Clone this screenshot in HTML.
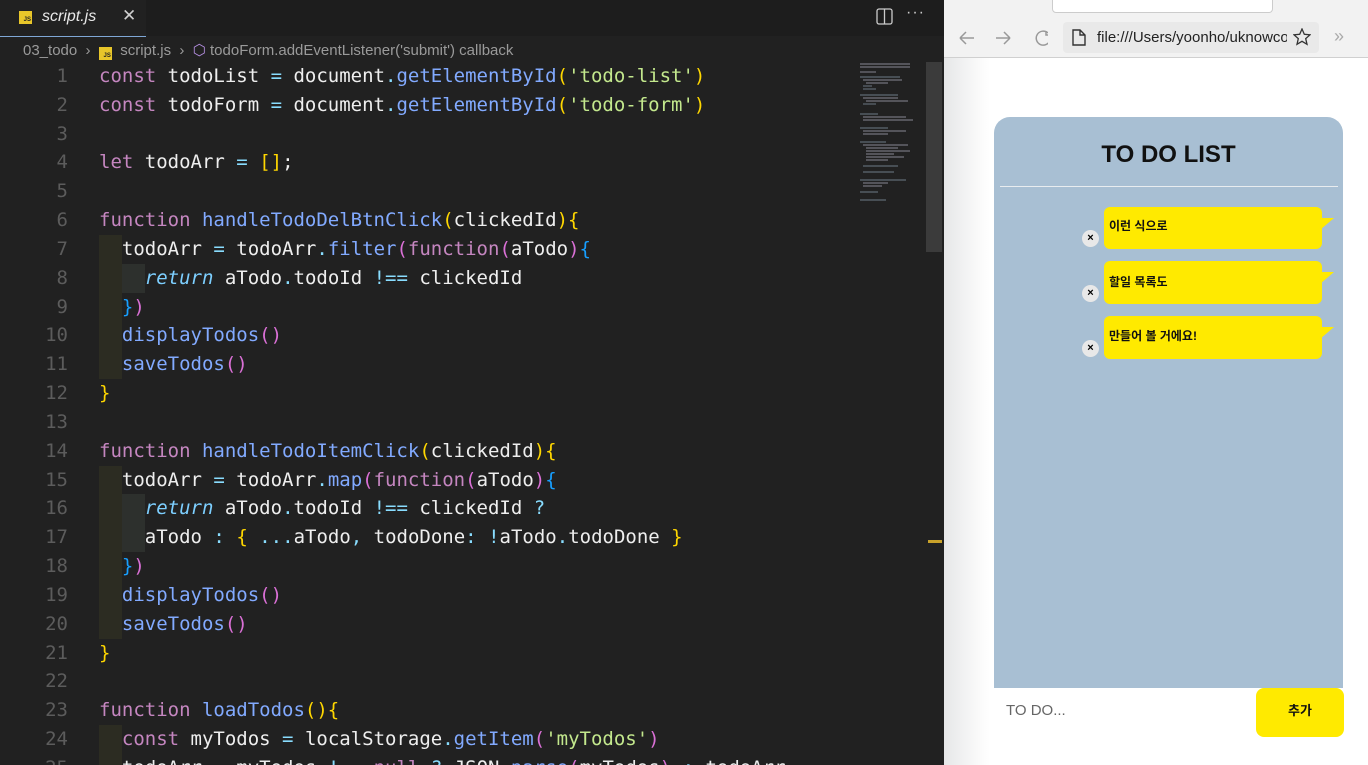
<!DOCTYPE html>
<html><head><meta charset="utf-8"><style>
*{margin:0;padding:0;box-sizing:border-box}
html,body{width:1368px;height:765px;overflow:hidden}
body{background:#212121;position:relative;font-family:"Liberation Sans",sans-serif}
#ed{position:absolute;left:0;top:0;width:944px;height:765px;background:#212121;overflow:hidden}
#tabs{position:absolute;left:0;top:0;width:944px;height:36px;background:#1d1d1d}
#tab{position:absolute;left:0;top:0;width:146px;height:37px;background:#212121;border-bottom:1px solid #7fa7d6}
.jsic{position:absolute;width:13px;height:13px;background:#e8c62a;color:#222;font:bold 6px "Liberation Sans",sans-serif;text-align:right;padding:6px 1px 0 0;line-height:6px}
#bc{position:absolute;left:23px;top:41px;font-size:15px;color:#9a9a9a;white-space:nowrap}
#code{position:absolute;left:0;top:62px;font-family:"DejaVu Sans Mono","Liberation Mono",monospace;font-size:19px;color:#eeeeee}
.l{height:28.83px;line-height:28.83px;white-space:pre;position:relative}
.n{display:inline-block;width:68px;text-align:right;color:#5c5c5c;margin-right:31px}
.i1{background:#2c2c22;display:inline-block;height:28.83px;vertical-align:top}.i2{background:#2d302d;display:inline-block;height:28.83px;vertical-align:top}
.k{color:#c586c0}.f{color:#82aaff}.s{color:#c3e88d}.y{color:#ffd700}.p{color:#da70d6}.b{color:#179fff}.r{color:#7dcfff;font-style:italic}.o{color:#89ddff}
#mini{position:absolute;left:858px;top:62px;width:58px;height:140px}
#sb{position:absolute;left:926px;top:62px;width:16px;height:190px;background:#3b3b3b}
#br{position:absolute;left:944px;top:0;width:424px;height:765px;background:#fff;overflow:hidden}
.t{position:absolute;white-space:nowrap}
</style></head><body>
<div id="ed">
<div id="tabs">
<div id="tab"><div class="jsic" style="left:19px;top:11px">JS</div>
<span style="position:absolute;left:42px;top:8px;font-style:italic;color:#e8e8e8;font-size:16px">script.js</span>
<span style="position:absolute;left:122px;top:6px;color:#cfcfcf;font-size:17px">✕</span></div>
<svg style="position:absolute;left:876px;top:8px" width="17" height="17"><rect x="1" y="1" width="15" height="15" rx="2" fill="none" stroke="#ccc" stroke-width="1.3"/><line x1="8.5" y1="1" x2="8.5" y2="16" stroke="#ccc" stroke-width="1.3"/></svg>
<span style="position:absolute;left:906px;top:4px;color:#ccc;font-size:16px;letter-spacing:1px">···</span>
</div>
<div id="bc">03_todo &nbsp;›&nbsp; <span class="jsic" style="position:relative;display:inline-block;top:2px">JS</span>&nbsp; script.js &nbsp;›&nbsp; <span style="color:#b48ee0">⬡</span> todoForm.addEventListener('submit') callback</div>
<div id="code">
<div class="l"><span class="n">1</span><span class="k">const</span> todoList <span class="o">=</span> document<span class="o">.</span><span class="f">getElementById</span><span class="y">(</span><span class="s">'todo-list'</span><span class="y">)</span></div>
<div class="l"><span class="n">2</span><span class="k">const</span> todoForm <span class="o">=</span> document<span class="o">.</span><span class="f">getElementById</span><span class="y">(</span><span class="s">'todo-form'</span><span class="y">)</span></div>
<div class="l"><span class="n">3</span></div>
<div class="l"><span class="n">4</span><span class="k">let</span> todoArr <span class="o">=</span> <span class="y">[]</span>;</div>
<div class="l"><span class="n">5</span></div>
<div class="l"><span class="n">6</span><span class="k">function</span> <span class="f">handleTodoDelBtnClick</span><span class="y">(</span>clickedId<span class="y">){</span></div>
<div class="l"><span class="n">7</span><span class="i1">  </span>todoArr <span class="o">=</span> todoArr<span class="o">.</span><span class="f">filter</span><span class="p">(</span><span class="k">function</span><span class="p">(</span>aTodo<span class="p">)</span><span class="b">{</span></div>
<div class="l"><span class="n">8</span><span class="i1">  </span><span class="i2">  </span><span class="r">return</span> aTodo<span class="o">.</span>todoId <span class="o">!==</span> clickedId</div>
<div class="l"><span class="n">9</span><span class="i1">  </span><span class="b">}</span><span class="p">)</span></div>
<div class="l"><span class="n">10</span><span class="i1">  </span><span class="f">displayTodos</span><span class="p">()</span></div>
<div class="l"><span class="n">11</span><span class="i1">  </span><span class="f">saveTodos</span><span class="p">()</span></div>
<div class="l"><span class="n">12</span><span class="y">}</span></div>
<div class="l"><span class="n">13</span></div>
<div class="l"><span class="n">14</span><span class="k">function</span> <span class="f">handleTodoItemClick</span><span class="y">(</span>clickedId<span class="y">){</span></div>
<div class="l"><span class="n">15</span><span class="i1">  </span>todoArr <span class="o">=</span> todoArr<span class="o">.</span><span class="f">map</span><span class="p">(</span><span class="k">function</span><span class="p">(</span>aTodo<span class="p">)</span><span class="b">{</span></div>
<div class="l"><span class="n">16</span><span class="i1">  </span><span class="i2">  </span><span class="r">return</span> aTodo<span class="o">.</span>todoId <span class="o">!==</span> clickedId <span class="o">?</span></div>
<div class="l"><span class="n">17</span><span class="i1">  </span><span class="i2">  </span>aTodo <span class="o">:</span> <span class="y">{</span> <span class="o">...</span>aTodo<span class="o">,</span> todoDone<span class="o">:</span> <span class="o">!</span>aTodo<span class="o">.</span>todoDone <span class="y">}</span></div>
<div class="l"><span class="n">18</span><span class="i1">  </span><span class="b">}</span><span class="p">)</span></div>
<div class="l"><span class="n">19</span><span class="i1">  </span><span class="f">displayTodos</span><span class="p">()</span></div>
<div class="l"><span class="n">20</span><span class="i1">  </span><span class="f">saveTodos</span><span class="p">()</span></div>
<div class="l"><span class="n">21</span><span class="y">}</span></div>
<div class="l"><span class="n">22</span></div>
<div class="l"><span class="n">23</span><span class="k">function</span> <span class="f">loadTodos</span><span class="y">(){</span></div>
<div class="l"><span class="n">24</span><span class="i1">  </span><span class="k">const</span> myTodos <span class="o">=</span> localStorage<span class="o">.</span><span class="f">getItem</span><span class="p">(</span><span class="s">'myTodos'</span><span class="p">)</span></div>
<div class="l"><span class="n">25</span><span class="i1">  </span>todoArr <span class="o">=</span> myTodos <span class="o">!==</span> <span class="k">null</span> <span class="o">?</span> JSON<span class="o">.</span><span class="f">parse</span><span class="p">(</span>myTodos<span class="p">)</span> <span class="o">:</span> todoArr</div>
</div>
<svg id="mini" viewBox="0 0 58 140">
<g stroke-width="1.2" opacity="0.6">
<line x1="2" y1="2" x2="52" y2="2" stroke="#aab"/><line x1="2" y1="5" x2="52" y2="5" stroke="#aab"/>
<line x1="2" y1="10" x2="18" y2="10" stroke="#aab"/>
<line x1="2" y1="15" x2="42" y2="15" stroke="#89a"/><line x1="5" y1="18" x2="44" y2="18" stroke="#aab"/><line x1="8" y1="21" x2="30" y2="21" stroke="#aab"/><line x1="5" y1="24" x2="14" y2="24" stroke="#89a"/><line x1="5" y1="27" x2="18" y2="27" stroke="#89a"/>
<line x1="2" y1="33" x2="40" y2="33" stroke="#89a"/><line x1="5" y1="36" x2="40" y2="36" stroke="#aab"/><line x1="8" y1="39" x2="50" y2="39" stroke="#aab"/><line x1="5" y1="42" x2="18" y2="42" stroke="#89a"/>
<line x1="2" y1="52" x2="20" y2="52" stroke="#89a"/><line x1="5" y1="55" x2="48" y2="55" stroke="#aab"/><line x1="5" y1="58" x2="55" y2="58" stroke="#aab"/>
<line x1="2" y1="66" x2="30" y2="66" stroke="#89a"/><line x1="5" y1="69" x2="48" y2="69" stroke="#aab"/><line x1="5" y1="72" x2="30" y2="72" stroke="#aab"/>
<line x1="2" y1="80" x2="28" y2="80" stroke="#89a"/><line x1="5" y1="83" x2="50" y2="83" stroke="#aab"/><line x1="8" y1="86" x2="40" y2="86" stroke="#aab"/><line x1="8" y1="89" x2="52" y2="89" stroke="#aab"/><line x1="8" y1="92" x2="36" y2="92" stroke="#aab"/><line x1="8" y1="95" x2="46" y2="95" stroke="#aab"/><line x1="8" y1="98" x2="30" y2="98" stroke="#aab"/><line x1="5" y1="104" x2="40" y2="104" stroke="#89a"/><line x1="5" y1="110" x2="36" y2="110" stroke="#89a"/>
<line x1="2" y1="118" x2="48" y2="118" stroke="#89a"/><line x1="5" y1="121" x2="30" y2="121" stroke="#aab"/><line x1="5" y1="124" x2="24" y2="124" stroke="#aab"/><line x1="2" y1="130" x2="20" y2="130" stroke="#89a"/><line x1="2" y1="138" x2="28" y2="138" stroke="#89a"/>
</g></svg>
<div id="sb"></div>
<div style="position:absolute;left:928px;top:540px;width:14px;height:3px;background:#c9a22a"></div>
</div>
<div id="br">
<div style="position:absolute;left:0;top:0;width:424px;height:58px;background:#f2f2f2;border-bottom:1px solid #d0d0d0"></div>
<div style="position:absolute;left:108px;top:-4px;width:221px;height:17px;background:#fff;border:1px solid #ccc;border-radius:4px"></div>
<svg style="position:absolute;left:14px;top:28px" width="90" height="20" fill="none" stroke="#999" stroke-width="1.5"><path d="M2 10H16M2 10L8 4M2 10L8 16"/><path d="M38 10H52M52 10L46 4M52 10L46 16"/><path d="M90 5A7 7 0 1 0 92 12"/><path d="M88 3V7H92"/></svg>
<div style="position:absolute;left:119px;top:22px;width:256px;height:31px;background:#e9e9e9;border-radius:4px"></div>
<svg style="position:absolute;left:128px;top:29px" width="14" height="17" fill="none" stroke="#333" stroke-width="1.4"><path d="M1 1H8L13 6V16H1Z M8 1V6H13"/></svg>
<div class="t" style="left:153px;top:29px;font-size:15px;color:#222;width:190px;overflow:hidden">file:///Users/yoonho/uknowcod</div>
<svg style="position:absolute;left:349px;top:28px" width="18" height="18" fill="none" stroke="#333" stroke-width="1.3"><path d="M9 1L11.3 6.3L17 6.8L12.7 10.6L14 16.3L9 13.3L4 16.3L5.3 10.6L1 6.8L6.7 6.3Z"/></svg>
<div class="t" style="left:390px;top:26px;color:#aaa;font-size:18px">»</div>
<div style="position:absolute;left:0;top:58px;width:46px;height:707px;background:linear-gradient(90deg,#e6e7e8,#fbfbfb 80%,#fff)"></div>
<div style="position:absolute;left:50px;top:117px;width:349px;height:571px;background:#a8bfd3;border-radius:16px 16px 0 0">
<div class="t" style="left:0;top:24px;width:349px;text-align:center;font-size:24px;font-weight:bold;color:#111">TO DO LIST</div>
<div style="position:absolute;left:6px;top:69px;width:338px;height:1px;background:#e8ecef"></div>
</div>
<div style="position:absolute;left:0;top:0;width:424px;height:765px;font-family:'Liberation Sans','Noto Sans CJK KR',sans-serif">
<div style="position:absolute;left:160px;top:207px;width:218px;height:42px;background:#ffea00;border-radius:6px"></div>
<div style="position:absolute;left:160px;top:261px;width:218px;height:43px;background:#ffea00;border-radius:6px"></div>
<div style="position:absolute;left:160px;top:316px;width:218px;height:43px;background:#ffea00;border-radius:6px"></div>
<svg style="position:absolute;left:376px;top:200px" width="16" height="160" fill="#ffea00"><path d="M0 18H14L0 30Z"/><path d="M0 72H14L0 84Z"/><path d="M0 127H14L0 139Z"/></svg>
<div class="t" style="left:165px;top:217px;font-size:12px;font-weight:bold;color:#111">이런 식으로</div>
<div class="t" style="left:165px;top:273px;font-size:12px;font-weight:bold;color:#111">할일 목록도</div>
<div class="t" style="left:165px;top:327px;font-size:12px;font-weight:bold;color:#111">만들어 볼 거에요!</div>
<div class="t" style="left:138px;top:230px;width:17px;height:17px;border-radius:50%;background:#e8e8e8;text-align:center;font-size:11px;font-weight:bold;line-height:17px">×</div>
<div class="t" style="left:138px;top:285px;width:17px;height:17px;border-radius:50%;background:#e8e8e8;text-align:center;font-size:11px;font-weight:bold;line-height:17px">×</div>
<div class="t" style="left:138px;top:340px;width:17px;height:17px;border-radius:50%;background:#e8e8e8;text-align:center;font-size:11px;font-weight:bold;line-height:17px">×</div>
<div class="t" style="left:62px;top:702px;font-size:15px;color:#666">TO DO...</div>
<div class="t" style="left:312px;top:688px;width:88px;height:49px;background:#ffea00;border-radius:8px;text-align:center;line-height:46px;font-size:13px;font-weight:bold;color:#111">추가</div>
</div>
</div>
</body></html>
